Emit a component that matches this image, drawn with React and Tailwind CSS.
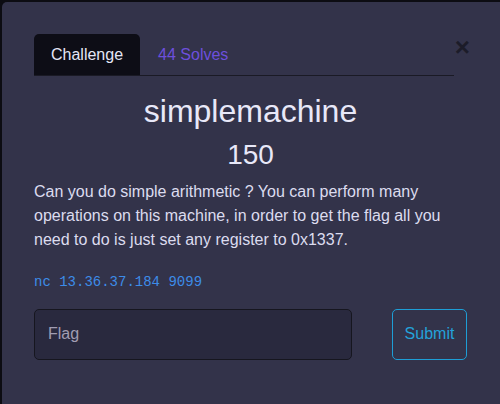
export default function App() {
  return (
    <div
      className="w-[500px] h-[404px] bg-[#0c0c12] pt-[2px] pl-[2px] overflow-hidden"
      style={{ fontFamily: '"Liberation Sans", Arial, sans-serif' }}
    >
      <div className="relative h-full bg-[#33334a] rounded-tl-[5px] pt-[32px] pl-[32px] pr-[33px]">
        {/* close */}
        <button className="absolute top-[32px] right-[30px] text-[26px] leading-none font-bold text-[#1c1c29]">
          ×
        </button>

        {/* tabs */}
        <div className="flex w-[420px] border-b border-[#1a1a25]">
          <div className="h-[41px] px-[17px] flex items-center bg-[#0d0d16] rounded-t-[5px] text-[16px] text-[#e4e6f7]">
            Challenge
          </div>
          <div className="h-[41px] px-[18px] flex items-center text-[16px] text-[#6d4fdc]">
            44 Solves
          </div>
        </div>

        <h2 className="mt-[16px] text-center text-[32px] leading-[1.2] text-[#e8e8f8]">
          simplemachine
        </h2>
        <h3 className="mt-[8px] text-center text-[28px] leading-[1.2] text-[#e8e8f8]">
          150
        </h3>

        <p className="mt-[8px] text-[16px] leading-[24px] text-[#dcdcef]">
          Can you do simple arithmetic ? You can perform many operations on this machine, in order to get the flag all you
          need to do is just set any register to 0x1337.
        </p>

        <p
          className="mt-[20px] text-[14px] leading-[20px] text-[#3d8ce8]"
          style={{ fontFamily: '"Liberation Mono", "Courier New", monospace' }}
        >
          nc 13.36.37.184 9099
        </p>

        <div className="mt-[17px] flex justify-between">
          <input
            placeholder="Flag"
            className="w-[318px] h-[51px] rounded-[5px] bg-[#29293e] border border-[#16161f] pl-[13px] text-[16px] text-[#e4e6f7] placeholder:text-[#a19db2] outline-none"
          />
          <button className="w-[75px] h-[51px] rounded-[5px] border border-[#1e9ed6] text-[16px] text-[#24a2da]">
            Submit
          </button>
        </div>
      </div>
    </div>
  );
}
